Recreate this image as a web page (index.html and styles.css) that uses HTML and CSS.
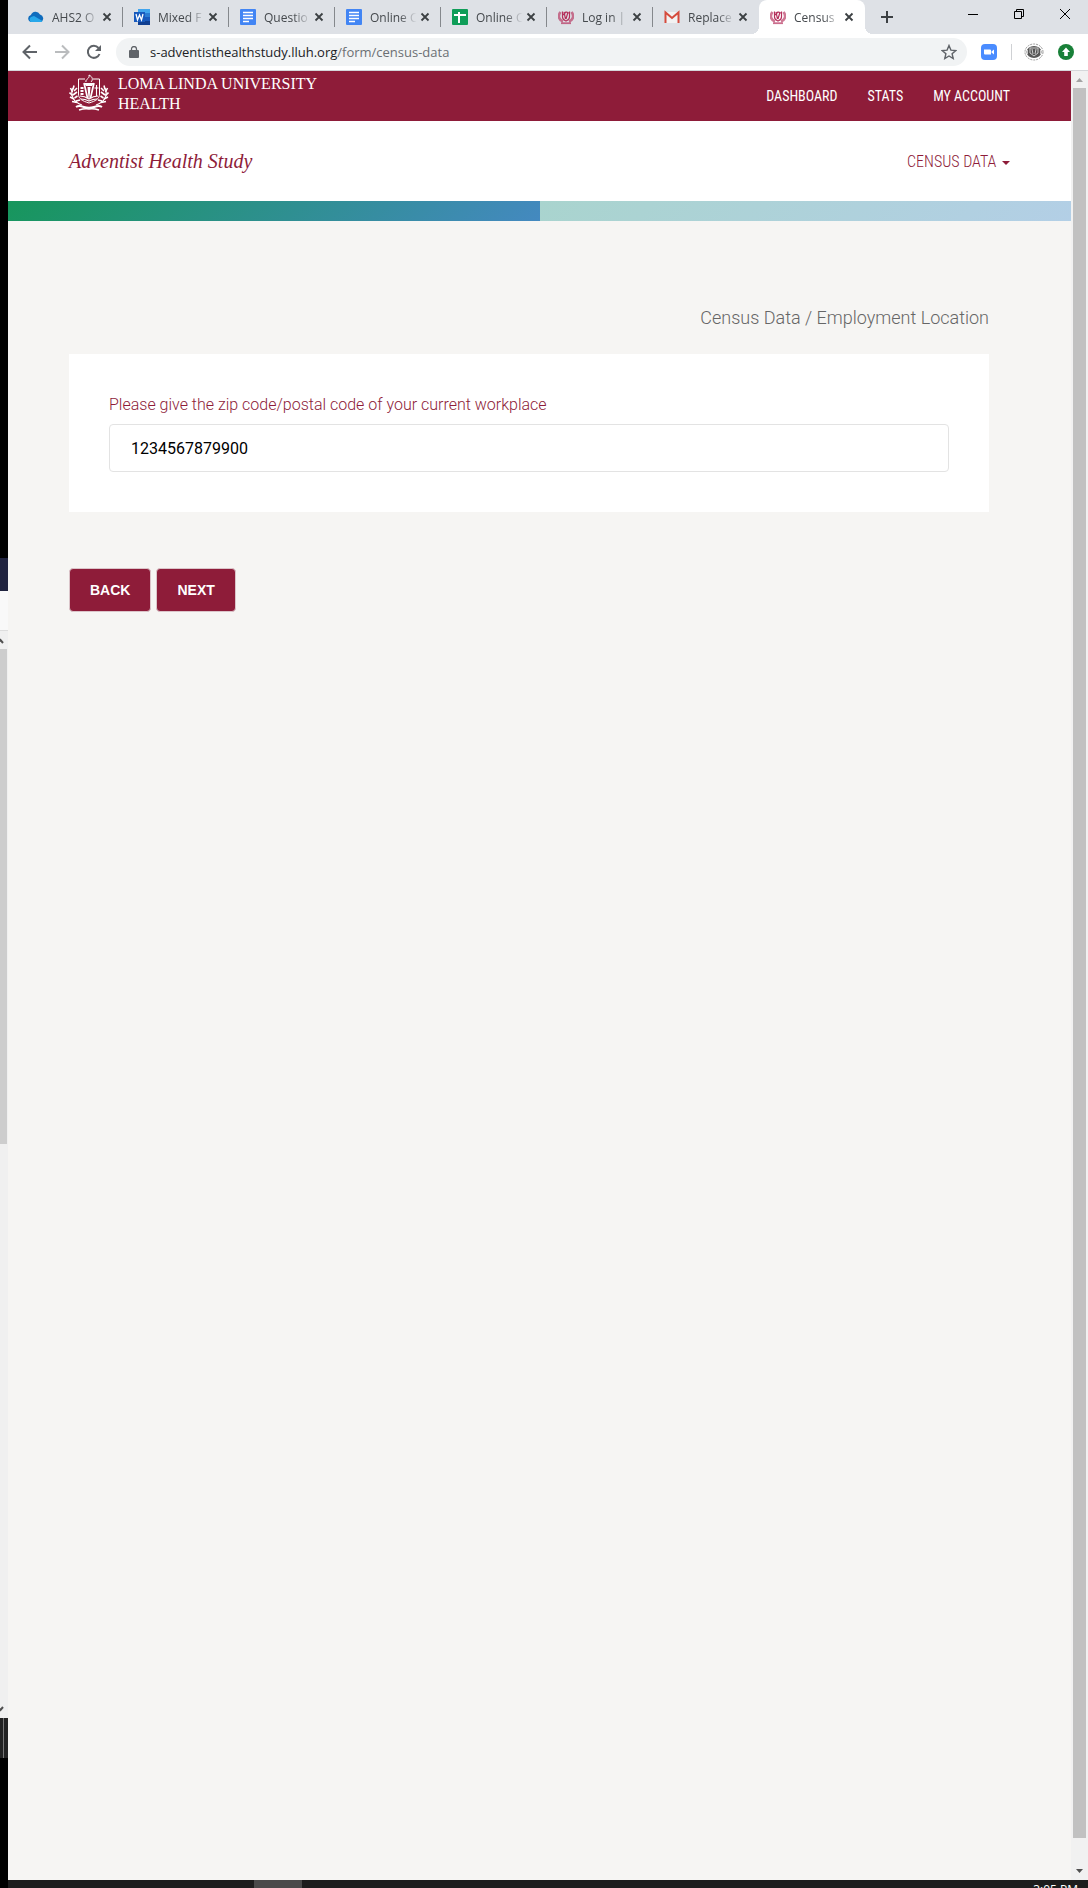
FILE: index.html
```
<!DOCTYPE html>
<html lang="en">
<head>
    <meta charset="utf-8">
    <title>Census Data</title>
    <meta name="viewport" content="width=device-width, initial-scale=1">
    <link rel="stylesheet" href="styles.css">
</head>
<body>
    <!-- shared icon shapes -->
    <svg class="defs" width="0" height="0" aria-hidden="true">
        <symbol id="close" viewBox="0 0 10 10"><path d="M1.5 1.5l7 7M8.5 1.5l-7 7" fill="none" stroke="#3c4043" stroke-width="1.8"/></symbol>
        <symbol id="doc" viewBox="0 0 16 16"><rect width="16" height="16" rx="1" fill="#4285f4"/><path d="M3 4h10M3 7h10M3 10h10M3 13h6" stroke="#fff" stroke-width="1.5" transform="translate(0 -.5)"/></symbol>
        <symbol id="crest" viewBox="0 0 40 38">
            <g fill="none" stroke="currentColor">
                <path d="M16 5H9.500v15c0 5 4 7 10.500 9 6.500-2 10.500-4 10.500-9V5H24" stroke-width="1"/>
                <path d="M11 22c4 0 6 1 9 3 3-2 5-3 9-3M12 25c4 0 6 1 8 2 2-1 4-2 8-2" stroke-width="1.2"/>
                <path d="M27.500 11v11M25.500 14h4" stroke-width="1.1"/>
                <path d="M13 13v9" stroke-width="3" stroke-dasharray="2 1"/>
                <path d="M4 14C1 21 4 28 13 31M36 14c3 7 0 14-9 17" stroke-width="1.2"/>
                <path d="M5 11.500l-1 4M1.500 14l2 4M.5 18.500l3 3M1 23l4 2M3 27.500l5 1M8 14l-3 3M8 18l-4 3M8.500 22l-3 2M11 26l-4 1M35 11.500l1 4M38.500 14l-2 4M39.500 18.500l-3 3M39 23l-4 2M37 27.500l-5 1M32 14l3 3M32 18l4 3M31.500 22l3 2M29 26l4 1" stroke-width="1.6"/>
                <path d="M7 33c3-2 5-1 8 0s7 1 10 0 5-2 8 0" stroke-width="2"/>
                <path d="M10 36c3-1 6-2 10-1 4-1 7 0 10 1" stroke-width="1.5"/>
                <path d="M15 9l3.500 15M25 9l-3.500 15" stroke-width="1.7"/>
                <path d="M17 8c-1-3 4-3 3-7 4 2 4 5 2 7" stroke-width="1"/>
            </g>
            <path d="M15 9h10l-2 3h-6zM18.500 13h3l-1 11h-1z" fill="currentColor"/>
        </symbol>
        <symbol id="crest-small" viewBox="0 0 16 16">
            <g fill="none" stroke="currentColor">
                <path d="M2.500 3C-.5 7 1 11 5 12.500M13.500 3c3 4 1.500 8-2.500 9.500" stroke-width="2.6" opacity=".65"/>
                <path d="M4.500 2.500V8c0 2.500 1.500 3 3.500 4 2-1 3.500-1.500 3.500-4V2.500" stroke-width="1.2"/>
                <path d="M6 3l1.500 7M10 3L8 10M5 6l3-3 3 1" stroke-width="1.2"/>
                <path d="M3 14.200h10" stroke-width="1.8" opacity=".7"/>
            </g>
        </symbol>
    </svg>

    <div class="desktop">
        <div class="behind" aria-hidden="true">
            <div class="behind-top"></div>
            <div class="behind-navy"></div>
            <div class="behind-white"></div>
            <div class="behind-scroll">
                <svg class="behind-arrow" viewBox="0 0 8 18"><path d="M-3 13l3.500-4L3 12" fill="none" stroke="#505050" stroke-width="2"/></svg>
                <div class="behind-thumb"></div>
                <div class="behind-track"></div>
                <svg class="behind-arrow" viewBox="0 0 8 18"><path d="M-3 6l3.500 4L3 7" fill="none" stroke="#505050" stroke-width="2"/></svg>
            </div>
            <div class="behind-task"></div>
            <div class="behind-bottom"></div>
        </div>

        <div class="window">
            <div class="tabs">
                <div class="tab">
                    <svg class="tab-icon" viewBox="0 0 16 16"><path d="M3.500 13a3.500 3.500 0 0 1-.6-6.900A5 5 0 0 1 12 5.500a4 4 0 0 1 1 7.500z" fill="#0f6cbd"/><path d="M3 13a3 3 0 0 1 0-5l3-1 8.500 5c-.5.700-1 1-2 1z" fill="#28a8ea"/></svg>
                    <span class="tab-name">AHS2 O</span>
                    <button class="tab-close" aria-label="Close tab"><svg><use href="#close"/></svg></button>
                </div>
                <div class="tab">
                    <svg class="tab-icon" viewBox="0 0 16 16"><path d="M4 0h12v16H4z" fill="#2b7cd3"/><path d="M4 0h12v4H4z" fill="#41a5ee"/><path d="M4 8h12v4H4z" fill="#185abd"/><path d="M4 12h12v4H4z" fill="#103f91"/><path d="M0 3h11v10H0z" fill="#185abd"/><path d="M2 5l1.500 6 2-5 2 5L9 5" fill="none" stroke="#fff" stroke-width="1.3"/></svg>
                    <span class="tab-name">Mixed F</span>
                    <button class="tab-close" aria-label="Close tab"><svg><use href="#close"/></svg></button>
                </div>
                <div class="tab">
                    <svg class="tab-icon"><use href="#doc"/></svg>
                    <span class="tab-name">Questio</span>
                    <button class="tab-close" aria-label="Close tab"><svg><use href="#close"/></svg></button>
                </div>
                <div class="tab">
                    <svg class="tab-icon"><use href="#doc"/></svg>
                    <span class="tab-name">Online C</span>
                    <button class="tab-close" aria-label="Close tab"><svg><use href="#close"/></svg></button>
                </div>
                <div class="tab">
                    <svg class="tab-icon" viewBox="0 0 16 16"><rect width="16" height="16" rx="1" fill="#0f9d58"/><path d="M2 6h12M7 3v11" stroke="#fff" stroke-width="2"/></svg>
                    <span class="tab-name">Online C</span>
                    <button class="tab-close" aria-label="Close tab"><svg><use href="#close"/></svg></button>
                </div>
                <div class="tab">
                    <svg class="tab-icon tab-crest"><use href="#crest-small"/></svg>
                    <span class="tab-name">Log in |</span>
                    <button class="tab-close" aria-label="Close tab"><svg><use href="#close"/></svg></button>
                </div>
                <div class="tab">
                    <svg class="tab-icon" viewBox="0 0 16 16"><path d="M1 3h14v11H1z" fill="#f2f2f2"/><path d="M1.500 14V3.500L8 9l6.500-5.500V14" fill="none" stroke="#d54b3d" stroke-width="2"/></svg>
                    <span class="tab-name">Replace</span>
                    <button class="tab-close" aria-label="Close tab"><svg><use href="#close"/></svg></button>
                </div>
                <div class="tab active">
                    <svg class="tab-icon tab-crest"><use href="#crest-small"/></svg>
                    <span class="tab-name">Census</span>
                    <button class="tab-close" aria-label="Close tab"><svg><use href="#close"/></svg></button>
                </div>
                <button class="new-tab" aria-label="New tab"><svg viewBox="0 0 12 12"><path d="M6 0v12M0 6h12" stroke="#3c4043" stroke-width="2"/></svg></button>
                <div class="window-buttons">
                    <button aria-label="Minimize"><svg viewBox="0 0 10 10"><path d="M0 5.500h10" stroke="#000"/></svg></button>
                    <button aria-label="Restore"><svg viewBox="0 0 10 10"><path d="M.5 2.500h7v7h-7zM2.500 2.500v-2h7v7h-2" fill="none" stroke="#000"/></svg></button>
                    <button aria-label="Close"><svg viewBox="0 0 10 10"><path d="M0 0l10 10M10 0L0 10" stroke="#000"/></svg></button>
                </div>
            </div>

            <div class="toolbar">
                <button class="tool" aria-label="Back"><svg viewBox="0 0 16 16"><path d="M15 8H2M8 1.500L1.500 8 8 14.500" fill="none" stroke="#5f6368" stroke-width="2"/></svg></button>
                <button class="tool" aria-label="Forward"><svg viewBox="0 0 16 16"><path d="M1 8h13M8 1.500L14.500 8 8 14.500" fill="none" stroke="#babcbe" stroke-width="2"/></svg></button>
                <button class="tool" aria-label="Reload"><svg viewBox="0 0 16 16"><path d="M13.500 10A6 6 0 1 1 12.500 4" fill="none" stroke="#5f6368" stroke-width="2"/><path d="M15 1v6H9z" fill="#5f6368"/></svg></button>
                <div class="address">
                    <svg class="lock" viewBox="0 0 10 12"><path d="M1 4h8a1 1 0 0 1 1 1v6a1 1 0 0 1-1 1H1a1 1 0 0 1-1-1V5a1 1 0 0 1 1-1z" fill="#5f6368"/><path d="M2.500 5V3a2.500 2.500 0 0 1 5 0v2" fill="none" stroke="#5f6368" stroke-width="1.3"/></svg>
                    <span class="url">s-adventisthealthstudy.lluh.org<span class="path">/form/census-data</span></span>
                    <button class="star" aria-label="Bookmark"><svg viewBox="0 0 16 16"><path d="M8 1.500l1.900 4.600 4.900.4-3.700 3.200 1.100 4.800L8 12l-4.200 2.500 1.100-4.800L1.200 6.500l4.900-.4z" fill="none" stroke="#5f6368" stroke-width="1.4"/></svg></button>
                </div>
                <button class="ext" aria-label="Zoom"><svg viewBox="0 0 16 16"><rect width="16" height="16" rx="4" fill="#4a8cff"/><path d="M3 5.500h6q1 0 1 1v4H4q-1 0-1-1zM10.500 7.500L13 5.500v5l-2.500-2z" fill="#fff"/></svg></button>
                <span class="tool-line"></span>
                <button class="ext profile" aria-label="Profile"><svg viewBox="0 0 20 18"><ellipse cx="10" cy="9" rx="9" ry="8" fill="none" stroke="#999" stroke-dasharray="2 1"/><ellipse cx="10" cy="9" rx="7.500" ry="6" fill="#555"/><path d="M6 5h8v5l-4 3-4-3zM8 6l1 5M12 6l-1 5M3.500 7v4M16.500 7v4" fill="none" stroke="#ccc"/></svg></button>
                <button class="ext" aria-label="Update"><svg viewBox="0 0 16 16"><circle cx="8" cy="8" r="8" fill="#188038"/><path d="M8 3.500L12 8H9.800v4H6.200V8H4z" fill="#fff"/></svg></button>
            </div>

            <div class="viewport">
                <div class="page">
                    <header class="site-header">
                        <a class="logo" href="#">
                            <svg class="logo-crest"><use href="#crest"/></svg>
                            <span>LOMA LINDA UNIVERSITY<br>HEALTH</span>
                        </a>
                        <nav class="main-nav">
                            <a href="#">DASHBOARD</a>
                            <a href="#">STATS</a>
                            <a href="#">MY ACCOUNT</a>
                        </nav>
                    </header>
                    <div class="sub-header">
                        <a class="study" href="#">Adventist Health Study</a>
                        <a class="section-menu" href="#">CENSUS DATA <span class="caret"></span></a>
                    </div>
                    <div class="progress">
                        <div class="done"></div>
                        <div class="todo"></div>
                    </div>
                    <main class="content">
                        <p class="breadcrumb">Census Data / Employment Location</p>
                        <form id="censusForm">
                            <div class="card">
                                <label for="zip">Please give the zip code/postal code of your current workplace</label>
                                <input type="text" id="zip" name="zip" value="1234567879900">
                            </div>
                            <div class="actions">
                                <button type="button">BACK</button>
                                <button type="submit">NEXT</button>
                            </div>
                        </form>
                    </main>
                </div>
                <div class="scrollbar" aria-hidden="true">
                    <svg viewBox="0 0 17 17"><path d="M5 11l3.500-4 3.500 4z" fill="#a3a3a3"/></svg>
                    <div class="thumb"></div>
                    <svg viewBox="0 0 17 17"><path d="M5 6l3.500 4L12 6z" fill="#505050"/></svg>
                </div>
            </div>

            <div class="taskbar">
                <div class="task-active"></div>
                <span class="clock">3:05 PM</span>
            </div>
        </div>
    </div>
</body>
</html>
```
FILE: styles.css
```
* {
    box-sizing: border-box;
}
body {
    margin: 0;
    background: #000;
    font-family: "Liberation Sans", Arial, sans-serif;
}
a {
    color: inherit;
    text-decoration: none;
}
button {
    border: none;
    padding: 0;
    background: none;
    cursor: pointer;
}
svg {
    display: block;
}
.defs {
    position: absolute;
}
.desktop {
    display: flex;
    min-height: 100vh;
}

/* sliver of the windows behind */
.behind {
    width: 8px;
    display: flex;
    flex-direction: column;
    overflow: hidden;
}
.behind-top {
    height: 558px;
}
.behind-navy {
    height: 33px;
    background: #20233f;
}
.behind-white {
    height: 40px;
    background: #f9f9f9;
    border-bottom: 1px solid #ddd;
}
.behind-scroll {
    flex: 1;
    display: flex;
    flex-direction: column;
    background: #f0f0f0;
}
.behind-arrow {
    width: 8px;
    height: 18px;
}
.behind-thumb {
    flex: 495;
    width: 7px;
    background: #cdcdcd;
}
.behind-track {
    flex: 556;
}
.behind-task {
    height: 40px;
    background: linear-gradient(90deg, #222 3px, #777 3px, #777 4px, #222 4px);
}
.behind-bottom {
    height: 130px;
}

/* browser window */
.window {
    flex: 1;
    min-width: 0;
    display: flex;
    flex-direction: column;
    background: #fff;
}
.tabs {
    display: flex;
    height: 34px;
    padding-left: 9px;
    background: #dee1e6;
    font-family: "Open Sans", "Noto Sans", sans-serif;
    font-size: 12px;
    color: #45494d;
}
.tab {
    width: 106px;
    display: flex;
    align-items: center;
    padding: 0 11px;
    background: linear-gradient(#85888c, #85888c) right center / 1px 20px no-repeat;
}
.tab-icon {
    width: 16px;
    height: 16px;
    flex: none;
}
.tab-crest {
    color: #b5305c;
}
.tab-name {
    flex: 1;
    margin: 0 1px 0 8px;
    white-space: nowrap;
    -webkit-mask-image: linear-gradient(90deg, #000 60%, transparent 95%);
    mask-image: linear-gradient(90deg, #000 60%, transparent 95%);
}
.tab-close svg {
    width: 10px;
    height: 10px;
}
.tab:nth-child(7) {
    background: none;
}
.tab.active {
    position: relative;
    background: #fff;
    border-radius: 8px 8px 0 0;
}
.tab.active::before,
.tab.active::after {
    content: "";
    position: absolute;
    bottom: 0;
    width: 8px;
    height: 8px;
}
.tab.active::before {
    left: -8px;
    background: radial-gradient(circle at 0 0, transparent 8px, #fff 8px);
}
.tab.active::after {
    right: -8px;
    background: radial-gradient(circle at 100% 0, transparent 8px, #fff 8px);
}
.new-tab {
    margin-left: 16px;
}
.new-tab svg {
    width: 12px;
    height: 12px;
}
.window-buttons {
    display: flex;
    margin-left: auto;
    height: 28px;
}
.window-buttons button {
    width: 46px;
}
.window-buttons svg {
    width: 10px;
    height: 10px;
    margin: auto;
}

.toolbar {
    display: flex;
    align-items: center;
    height: 37px;
    padding: 0 14px;
    border-bottom: 1px solid #d5d7da;
}
.tool {
    margin-right: 16px;
}
.tool svg,
.ext svg {
    width: 16px;
    height: 16px;
}
.address {
    flex: 1;
    display: flex;
    align-items: center;
    height: 28px;
    margin-left: -2px;
    margin-right: 14px;
    padding: 0 10px 0 13px;
    border-radius: 14px;
    background: #f1f3f4;
}
.lock {
    width: 10px;
    height: 12px;
    margin-right: 11px;
}
.url {
    flex: 1;
    font-family: "Open Sans", "Noto Sans", sans-serif;
    font-size: 13px;
    color: #202124;
}
.path {
    color: #6b6f73;
}
.star svg {
    width: 16px;
    height: 16px;
}
.tool-line {
    width: 1px;
    height: 16px;
    margin: 0 12px 0 14px;
    background: #cfd1d4;
}
.ext.profile {
    margin-right: 14px;
}
.ext.profile svg {
    width: 20px;
    height: 18px;
}

.viewport {
    flex: 1;
    display: flex;
}
.page {
    flex: 1;
    min-width: 0;
    background: #f6f5f3;
}
.scrollbar {
    width: 17px;
    display: flex;
    flex-direction: column;
    background: #f1f1f1;
}
.scrollbar svg {
    width: 17px;
    height: 17px;
}
.thumb {
    flex: 1;
    margin: 0 2px 25px;
    background: #c1c1c1;
}

/* site */
.site-header {
    display: flex;
    justify-content: space-between;
    height: 50px;
    padding: 0 61px;
    background: #8e1c39;
    color: #fff;
}
.logo {
    display: flex;
    gap: 9px;
    padding-top: 3px;
    font-family: "Liberation Serif", serif;
    font-size: 16px;
    line-height: 20px;
}
.logo-crest {
    width: 40px;
    height: 38px;
}
.main-nav {
    display: flex;
    gap: 30px;
    align-items: center;
    font-family: "Liberation Sans Narrow", "Roboto Condensed", "Roboto", sans-serif;
    font-size: 14px;
}
.sub-header {
    display: flex;
    justify-content: space-between;
    align-items: center;
    height: 80px;
    padding: 0 61px;
    background: #fff;
    color: #8e1c39;
}
.study {
    font-family: "Liberation Serif", serif;
    font-size: 20px;
    font-style: italic;
}
.section-menu {
    font-family: "Liberation Sans Narrow", "Roboto Condensed", "Roboto", sans-serif;
    font-size: 16px;
    font-weight: 300;
}
.caret {
    display: inline-block;
    margin-left: 2px;
    border: 4px solid transparent;
    border-top-color: #8e1c39;
    border-bottom: none;
    vertical-align: 2px;
}
.progress {
    display: flex;
    height: 20px;
}
.done,
.todo {
    flex: 1;
    background: linear-gradient(135deg, #17965c, #4489c0);
}
.todo {
    background: linear-gradient(135deg, #a9d4ce, #b3cfe6);
}
.content {
    padding: 85px 82px 40px 61px;
}
.breadcrumb {
    margin: 0 0 24px;
    font-family: "Roboto", sans-serif;
    font-weight: 300;
    font-size: 18px;
    line-height: 24px;
    text-align: right;
    color: #666;
}
.card {
    padding: 40px;
    background: #fff;
}
.card label {
    display: block;
    margin-bottom: 8px;
    font-family: "Roboto", sans-serif;
    font-weight: 300;
    font-size: 16px;
    line-height: 22px;
    color: #8e1c39;
}
.card input {
    display: block;
    width: 100%;
    height: 48px;
    padding: 0 21px;
    border: 1px solid #e3e3e3;
    border-radius: 4px;
    font-family: "Roboto", sans-serif;
    font-size: 16px;
    color: #000;
}
.actions {
    display: flex;
    gap: 5px;
    padding-top: 56px;
}
.actions button {
    padding: 0 20px;
    height: 44px;
    border: 1px solid #dbc4c9;
    border-radius: 4px;
    background: #8e1c39;
    color: #fff;
    font-family: "Liberation Sans", Arial, sans-serif;
    font-weight: bold;
    font-size: 14px;
}

.taskbar {
    display: flex;
    height: 8px;
    padding: 0 10px 0 246px;
    overflow: hidden;
    background: #1d1d1d;
}
.task-active {
    width: 48px;
    background: #4a4a4a;
}
.clock {
    margin-left: auto;
    padding-top: 2px;
    font-family: "Open Sans", sans-serif;
    font-size: 12px;
    line-height: 16px;
    color: #fff;
}
```
